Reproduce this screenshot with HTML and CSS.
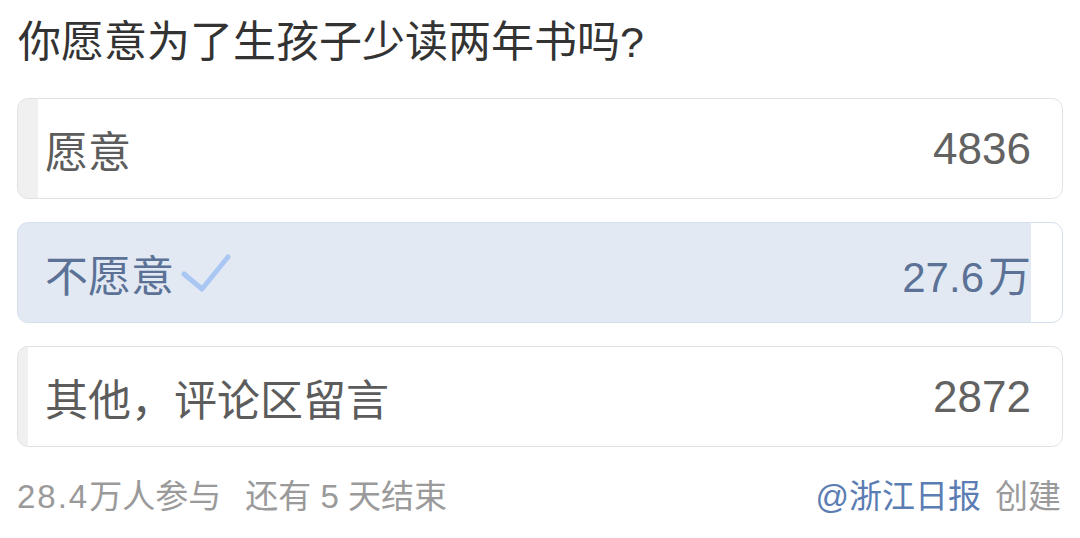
FILE: index.html
```html
<!DOCTYPE html>
<html lang="zh-CN">
<head>
<meta charset="utf-8">
<link rel="stylesheet" href="styles.css">
</head>
<body>
<div class="poll">
  <h1 class="title">你愿意为了生孩子少读两年书吗?</h1>
  <div class="options">
    <div class="option" style="--pct: 1.9%">
      <span class="label">愿意</span>
      <span class="count">4836</span>
    </div>
    <div class="option selected" style="--pct: 97%">
      <span class="label">不愿意<svg class="check" width="50" height="40" viewBox="0 0 50 40"><path d="M3 20 L21 35 L47 3" fill="none" stroke="#a9c7f2" stroke-width="5" stroke-linecap="round" stroke-linejoin="round"/></svg></span>
      <span class="count">27.6<span class="unit">万</span></span>
    </div>
    <div class="option" style="--pct: 1%">
      <span class="label">其他，评论区留言</span>
      <span class="count">2872</span>
    </div>
  </div>
  <div class="footer">
    <div class="stats"><span><span class="num">28.4</span>万人参与</span><span class="remain">还有 5 天结束</span></div>
    <div class="creator"><span class="author">@浙江日报</span><span class="created">创建</span></div>
  </div>
</div>
</body>
</html>
```

FILE: styles.css
```css
html, body {
  margin: 0;
  padding: 0;
  background: #ffffff;
}
body {
  font-family: "Liberation Sans", "Noto Sans CJK SC", sans-serif;
  width: 1080px;
  height: 538px;
  overflow: hidden;
}
.poll {
  padding: 0 17px;
}
.title {
  margin: 0;
  font-weight: normal;
  font-size: 43px;
  line-height: 84px;
  color: #333333;
  padding-left: 1px;
  height: 98px;
  box-sizing: border-box;
}
.options {
  display: flex;
  flex-direction: column;
  gap: 23px;
}
.option {
  height: 101px;
  box-sizing: border-box;
  border: 1px solid #e2e2e2;
  border-radius: 11px;
  display: flex;
  align-items: center;
  justify-content: space-between;
  padding: 0 31px 0 27px;
  font-size: 43px;
  color: #5c5c5c;
  background: linear-gradient(to right, #f0f0f0 var(--pct), #ffffff var(--pct));
}
.option.selected {
  border-color: #d5e0ee;
  color: #5b7296;
  background: linear-gradient(to right, #e2e9f3 var(--pct), #ffffff var(--pct));
}
.label {
  display: flex;
  align-items: center;
}
.check {
  margin-left: 7px;
  margin-top: 2px;
}
.count {
  font-size: 44px;
  color: #626262;
}
.selected .count {
  color: #5b7296;
  font-size: 42px;
}
.unit {
  margin-left: 4px;
  font-size: 43px;
}
.footer {
  display: flex;
  justify-content: space-between;
  align-items: center;
  height: 94px;
  font-size: 33px;
  color: #9a9a9a;
  padding-right: 2px;
}
.num {
  letter-spacing: 2px;
}
.remain {
  margin-left: 24px;
}
.author {
  color: #5b7db3;
}
.created {
  margin-left: 14px;
}
```
